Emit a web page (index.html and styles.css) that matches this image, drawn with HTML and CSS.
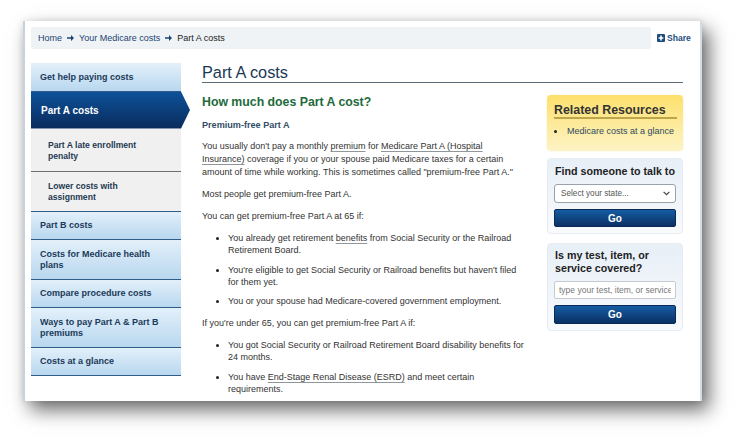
FILE: index.html
```html
<!DOCTYPE html>
<html lang="en">
<head>
<meta charset="utf-8">
<title>Part A costs</title>
<link rel="stylesheet" href="styles.css">
</head>
<body>
<div class="frame">
  <div class="topbar">
    <nav class="crumbs">
      <a href="#">Home</a>
      <svg class="arr" width="7" height="6" viewBox="0 0 7 6"><path d="M0 2.2h4V0l3 3-3 3V3.8H0z" fill="#1d4470"/></svg>
      <a href="#">Your Medicare costs</a>
      <svg class="arr" width="7" height="6" viewBox="0 0 7 6"><path d="M0 2.2h4V0l3 3-3 3V3.8H0z" fill="#1d4470"/></svg>
      <span class="current">Part A costs</span>
    </nav>
    <a class="share" href="#"><svg width="8" height="8" viewBox="0 0 8 8"><rect width="8" height="8" rx="1" fill="#1d4b7d"/><path d="M3.2 1.6h1.6v1.6h1.6v1.6H4.8v1.6H3.2V4.8H1.6V3.2h1.6z" fill="#fff"/></svg>Share</a>
  </div>

  <div class="layout">
    <ul class="sidenav">
      <li class="nav-item"><a href="#">Get help paying costs</a></li>
      <li class="nav-item active"><a href="#">Part A costs</a></li>
      <li class="nav-sub"><a href="#">Part A late enrollment penalty</a></li>
      <li class="nav-sub last"><a href="#">Lower costs with assignment</a></li>
      <li class="nav-item"><a href="#">Part B costs</a></li>
      <li class="nav-item"><a href="#">Costs for Medicare health plans</a></li>
      <li class="nav-item"><a href="#">Compare procedure costs</a></li>
      <li class="nav-item"><a href="#">Ways to pay Part A &amp; Part B premiums</a></li>
      <li class="nav-item"><a href="#">Costs at a glance</a></li>
    </ul>

    <main class="main">
      <h1 class="page-title">Part A costs</h1>
      <div class="cols">
        <article class="article">
          <h2 class="q-title">How much does Part A cost?</h2>
          <h3 class="sub-title">Premium-free Part A</h3>
          <p>You usually don't pay a monthly <a class="term" href="#">premium</a> for <a class="term" href="#">Medicare Part A (Hospital Insurance)</a> coverage if you or your spouse paid Medicare taxes for a certain amount of time while working. This is sometimes called "premium-free Part A."</p>
          <p>Most people get premium-free Part A.</p>
          <p>You can get premium-free Part A at 65 if:</p>
          <ul class="bullets">
            <li><span>You already get retirement <a class="term" href="#">benefits</a> from Social Security or the Railroad Retirement Board.</span></li>
            <li><span>You're eligible to get Social Security or Railroad benefits but haven't filed for them yet.</span></li>
            <li><span>You or your spouse had Medicare-covered government employment.</span></li>
          </ul>
          <p>If you're under 65, you can get premium-free Part A if:</p>
          <ul class="bullets">
            <li><span>You got Social Security or Railroad Retirement Board disability benefits for 24 months.</span></li>
            <li><span>You have <a class="term" href="#">End-Stage Renal Disease (ESRD)</a> and meet certain requirements.</span></li>
          </ul>
        </article>

        <aside class="aside">
          <section class="box related">
            <h2 class="box-title">Related Resources</h2>
            <ul class="rel-list">
              <li><a href="#">Medicare costs at a glance</a></li>
            </ul>
          </section>
          <section class="box tool">
            <h2 class="tool-title">Find someone to talk to</h2>
            <div class="select"><span>Select your state...</span><svg width="7" height="5" viewBox="0 0 7 5"><path d="M0.6 0.8 3.5 3.7 6.4 0.8" fill="none" stroke="#444" stroke-width="1.2"/></svg></div>
            <button class="go" type="button">Go</button>
          </section>
          <section class="box tool test">
            <h2 class="tool-title">Is my test, item, or service covered?</h2>
            <input class="field" type="text" placeholder="type your test, item, or service">
            <button class="go" type="button">Go</button>
          </section>
        </aside>
      </div>
    </main>
  </div>
</div>
</body>
</html>
```

FILE: styles.css
```css
* { box-sizing: border-box; }
html, body { margin: 0; padding: 0; background: #fff; }
body {
  font-family: "Liberation Sans", Arial, sans-serif;
  color: #333;
  width: 744px;
  height: 443px;
  overflow: hidden;
}
a { color: inherit; text-decoration: none; }
ul { list-style: none; margin: 0; padding: 0; }
h1, h2, h3, p { margin: 0; font-weight: normal; }

.frame {
  margin: 21px 0 0 23px;
  width: 679px;
  height: 380px;
  background: #fff;
  border-left: 2px solid #c9d2da;
  border-right: 2px solid #d3dbe3;
  box-shadow: 7px 9px 18px rgba(0,0,0,0.58), 0 0 7px rgba(0,0,0,0.10);
  padding: 6px 10px 0 6px;
  overflow: hidden;
}

/* top bar */
.topbar { display: flex; align-items: flex-start; gap: 6px; }
.crumbs {
  flex: 0 0 620px;
  height: 22px;
  background: #eff3f6;
  border-radius: 2px;
  display: flex;
  align-items: center;
  gap: 5px;
  padding-left: 7px;
  font-size: 9px;
  color: #1d4470;
}
.crumbs .current { color: #1b1b1b; }
.share {
  display: flex;
  align-items: center;
  gap: 2px;
  margin-top: 6px;
  font-size: 8.6px;
  font-weight: bold;
  color: #24507e;
}

/* layout */
.layout {
  display: grid;
  grid-template-columns: 150px 481px;
  column-gap: 21px;
  margin-top: 14px;
}

/* side nav */
.sidenav { font-weight: bold; font-size: 9px; line-height: 11px; }
.nav-item a {
  display: block;
  padding: 8.5px 12px 8px 9px;
  background: linear-gradient(#e3f0fa, #b8d7ef);
  border-bottom: 1px solid #2e5d88;
  color: #1b3a5a;
}
.nav-item.active { width: 159px; }
.nav-item.active a {
  padding: 13px 10px;
  font-size: 10px;
  color: #fff;
  border-bottom: 0;
  background: linear-gradient(#0d5199, #0a2b5b);
  clip-path: polygon(0 0, 150px 0, 159px 50%, 150px 100%, 0 100%);
}
.nav-sub a {
  display: block;
  padding: 11px 30px 9px 17px;
  font-size: 8.6px;
  background: #f0f0f0;
  color: #243a52;
  border-bottom: 1px solid #6f6f6f;
}
.nav-sub.last a { padding: 9px 30px 8px 17px; border-bottom-color: #2e5d88; }

/* main */
.page-title {
  font-size: 16.3px;
  line-height: 19px;
  color: #1a3856;
  border-bottom: 1px solid #5b6c79;
}
.cols {
  display: grid;
  grid-template-columns: 1fr 136px;
  column-gap: 21px;
  margin-top: 12px;
}
.article { font-size: 9px; line-height: 13px; color: #333; }
.q-title {
  font-weight: bold;
  font-size: 12.3px;
  line-height: 14px;
  color: #1d6a3b;
}
.sub-title {
  margin-top: 10px;
  font-weight: bold;
  font-size: 9.1px;
  line-height: 12px;
  color: #334d66;
}
.sub-title + p { margin-top: 9px; }
.article p { margin-bottom: 9px; }
.term { text-decoration: underline; text-decoration-color: #8f969c; text-underline-offset: 2px; }
.bullets { margin: 4px 0 10px; }
.bullets li {
  display: grid;
  grid-template-columns: 26px 1fr;
  line-height: 12px;
}
.bullets li + li { margin-top: 7.5px; }
.bullets li::before {
  content: "";
  width: 3px;
  height: 3px;
  border-radius: 50%;
  background: #222;
  margin: 5px 0 0 14px;
}

/* aside */
.aside { display: flex; flex-direction: column; }
.box { border-radius: 4px; }
.related {
  height: 56px;
  padding: 8px 6px 0 7px;
  background: linear-gradient(#fde06c, #fdf4c6);
  box-shadow: 0 0 2px rgba(200,170,60,0.25);
}
.box-title {
  font-weight: bold;
  font-size: 12.4px;
  line-height: 14px;
  color: #333;
  border-bottom: 2px solid #bfa54a;
}
.rel-list { margin-top: 6px; font-size: 9px; line-height: 12px; color: #2f4a63; }
.rel-list li { display: grid; grid-template-columns: 13px 1fr; }
.rel-list li::before {
  content: "";
  width: 3px; height: 3px; border-radius: 50%;
  background: #222;
  margin: 5px 0 0 0;
}
.tool {
  margin-top: 7px;
  padding: 6px;
  background: linear-gradient(#e7eff7, #f8fafc);
  border: 1px solid #e6ecf2;
  display: flex;
  flex-direction: column;
  gap: 6px;
}
.tool.test { margin-top: 9px; padding-top: 5px; padding-bottom: 6px; }
.tool-title {
  padding-left: 1px;
  font-weight: bold;
  font-size: 10.7px;
  line-height: 13px;
  color: #222;
}
.select {
  height: 19px;
  background: #fff;
  border: 1px solid #9aa3ab;
  border-radius: 3px;
  display: flex;
  align-items: center;
  justify-content: space-between;
  padding: 0 5px 0 6px;
  font-size: 8.2px;
  color: #555;
}
.field {
  height: 18px;
  width: 100%;
  border: 1px solid #c8ccd0;
  border-radius: 2px;
  padding: 0 4px;
  font-family: "Liberation Sans", Arial, sans-serif;
  font-size: 8.5px;
  background: #fff;
}
.field::placeholder { color: #777; }
.go {
  height: 18px;
  border: 1px solid #0a2a55;
  border-radius: 2px;
  background: linear-gradient(#155ca3, #0a3064);
  color: #fff;
  font-family: "Liberation Sans", Arial, sans-serif;
  font-weight: bold;
  font-size: 10px;
  padding: 0;
}
.test .go { height: 19px; }
```
